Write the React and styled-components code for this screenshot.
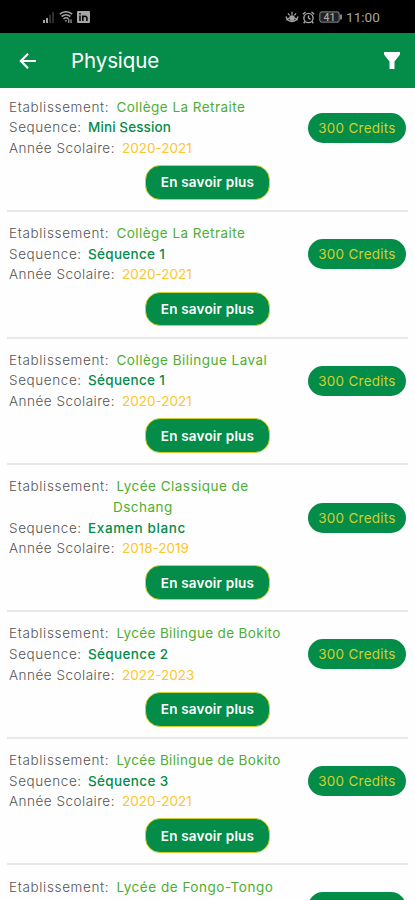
import React from 'react';
import styled, { createGlobalStyle, ThemeProvider } from 'styled-components';

const theme = {
  colors: {
    primary: '#048c49',
    institution: '#4fae32',
    sequence: '#048c49',
    year: '#fcc62c',
    accent: '#d3d02c',
    label: '#555',
    divider: '#e8e8e8',
  },
};

const GlobalStyle = createGlobalStyle`
  * {
    box-sizing: border-box;
  }
  body {
    margin: 0;
    background: #fefefe;
    font-family: Inter, "Noto Sans", sans-serif;
  }
`;

const Screen = styled.div`
  height: 900px;
  overflow: hidden;
`;

// Phone status bar
const StatusBar = styled.div`
  display: flex;
  justify-content: space-between;
  align-items: center;
  height: 33px;
  padding: 1px 34px 0 42px;
  background: #000;
  color: #a5a5a5;
`;

const StatusGroup = styled.div`
  display: flex;
  align-items: center;
  gap: ${({ $gap }) => $gap}px;

  svg {
    display: block;
  }
`;

const Clock = styled.span`
  width: 35px;
  font-family: Roboto, sans-serif;
  font-size: 13.6px;
  line-height: 16px;
  white-space: nowrap;
`;

// App bar with the back arrow and the filter
const AppBar = styled.header`
  display: flex;
  align-items: center;
  height: 55px;
  padding: 0 14px 0 16px;
  background: ${({ theme }) => theme.colors.primary};
  color: #fff;
`;

const IconButton = styled.button`
  display: flex;
  padding: 0;
  border: 0;
  background: none;
  color: inherit;
`;

const Title = styled.h1`
  flex: 1;
  margin: 0 0 0 31px;
  font-size: 20.5px;
  font-weight: 400;
  line-height: 28px;
  letter-spacing: -0.1px;
`;

const List = styled.main`
  padding: 0 7px;
`;

const Card = styled.article`
  display: flex;
  flex-direction: column;
  padding: 11.2px 2px 10.3px;
  border-bottom: 2px solid ${({ theme }) => theme.colors.divider};

  &:first-child {
    padding-top: 8.7px;
  }
`;

const CardBody = styled.div`
  display: flex;
  justify-content: space-between;
  align-items: center;
`;

const Field = styled.p`
  display: flex;
  margin: 0;
  font-size: 13.5px;
  line-height: 20.6px;
  white-space: nowrap;
`;

const Label = styled.span`
  width: ${({ $width }) => $width}px;
  font-weight: 300;
  color: ${({ theme }) => theme.colors.label};
  letter-spacing: ${({ $spacing }) => $spacing}px;
`;

const Value = styled.span`
  color: ${({ theme, $kind }) => theme.colors[$kind]};
  font-weight: ${({ $kind }) => ($kind === 'sequence' ? 500 : 400)};
  letter-spacing: ${({ $spacing = 0 }) => $spacing}px;
`;

// Second line of a long school name
const WrappedLine = styled.span`
  display: block;
  margin-left: -3.5px;
`;

const Credits = styled.span`
  flex: none;
  width: 98px;
  height: 30px;
  border-radius: 15px;
  background: ${({ theme }) => theme.colors.primary};
  color: ${({ theme }) => theme.colors.accent};
  font-size: 13.5px;
  line-height: 30px;
  letter-spacing: 0.25px;
  text-align: center;
  white-space: nowrap;
`;

const MoreButton = styled.button`
  align-self: center;
  width: 125px;
  height: 34.6px;
  margin-top: 6.7px;
  padding: 0;
  border: 1px solid ${({ theme }) => theme.colors.accent};
  border-radius: 15px;
  background: ${({ theme }) => theme.colors.primary};
  color: #fff;
  font: 600 13.5px/30px Inter, "Noto Sans", sans-serif;
  letter-spacing: 0.2px;
`;

const SignalIcon = () => (
  <svg width="13" height="12" viewBox="0 0 13 12" fill="currentColor">
    <path d="M1 9h2v3H1zM4 7h2v5H4z" />
    <path d="M7 4h2v8H7zM10 1h2v11h-2z" opacity=".28" />
  </svg>
);

const WifiIcon = () => (
  <svg width="14" height="13" viewBox="0 0 14 13" fill="none" stroke="currentColor" strokeWidth="1.6">
    <path d="M.8 3.2Q7-1.6 13.2 3.2M2.6 5.5Q7 2 11.4 5.5M4.5 7.8Q7 5.8 9.5 7.8" />
    <path d="M5.6 9.2h2.8L7 11z" fill="currentColor" stroke="none" />
    <path d="M9.8 8v4M12 8.5V12" strokeWidth="1.2" />
  </svg>
);

const LinkedinIcon = () => (
  <svg width="13" height="12" viewBox="0 0 13 12">
    <rect width="13" height="12" rx="1" fill="currentColor" />
    <path
      d="M3 4.6V10M3 2v1.4M5.8 10V4.6M5.8 7Q6 5.2 7.9 5.2T9.9 7.2V10"
      fill="none"
      stroke="#000"
      strokeWidth="1.5"
    />
  </svg>
);

// Eye-comfort mode: lashes above a lowered lid
const EyeIcon = () => (
  <svg width="14" height="12" viewBox="0 0 14 12" fill="none" stroke="currentColor" strokeWidth="1.3">
    <path d="M1 5.5Q2.5 10.5 7 10.5T13 5.5M1.2 9L4 7M12.8 9L10 7M7 .8v3M3 2.3l1.6 2M11 2.3l-1.6 2" />
    <circle cx="7" cy="7" r="2.2" fill="currentColor" />
  </svg>
);

const AlarmIcon = () => (
  <svg width="13" height="13" viewBox="0 0 13 13" fill="none" stroke="currentColor" strokeWidth="1.4">
    <circle cx="6.5" cy="7" r="4.6" />
    <path d="M.8 3.3L3.5 1M12.2 3.3L9.5 1M6.5 4.5V7l2 1.4M3 10.5l-1.3 1.7M10 10.5l1.3 1.7" />
  </svg>
);

const BatteryIcon = () => (
  <svg width="24" height="12" viewBox="0 0 24 12" fill="none" stroke="currentColor">
    <rect x=".8" y=".8" width="19.4" height="10.4" rx="2.5" fill="#222" stroke="#707070" strokeWidth="1.2" />
    <path d="M22 3.5v5" strokeWidth="1.6" />
    <text x="10.5" y="9.6" textAnchor="middle" fill="currentColor" stroke="none" fontFamily="Roboto" fontSize="10.5" fontWeight="500">
      41
    </text>
  </svg>
);

const BackIcon = () => (
  <svg width="24" height="24" viewBox="0 0 24 24" fill="none" stroke="currentColor" strokeWidth="2.2">
    <path d="M19.8 12H5.5M12 4.8L4.9 12L12 19.2" />
  </svg>
);

const FilterIcon = () => (
  <svg width="18" height="18" viewBox="0 0 18 18" fill="currentColor">
    <path d="M1 0h16v2.5L11.5 9.5V17h-5V9.5L1 2.5z" />
  </svg>
);

// tracking: letter spacing of the school name and of the sequence
const papers = [
  { school: ['Collège La Retraite'], sequence: 'Mini Session', year: '2020-2021', tracking: [0.45, 0.1] },
  { school: ['Collège La Retraite'], sequence: 'Séquence 1', year: '2020-2021', tracking: [0.45, 0.3] },
  { school: ['Collège Bilingue Laval'], sequence: 'Séquence 1', year: '2020-2021', tracking: [0.48, 0.3] },
  { school: ['Lycée Classique de', 'Dschang'], sequence: 'Examen blanc', year: '2018-2019', tracking: [0.48, 0.64] },
  { school: ['Lycée Bilingue de Bokito'], sequence: 'Séquence 2', year: '2022-2023', tracking: [0.35, 0.35] },
  { school: ['Lycée Bilingue de Bokito'], sequence: 'Séquence 3', year: '2020-2021', tracking: [0.35, 0.35] },
  { school: ['Lycée de Fongo-Tongo'], sequence: 'Séquence 1', year: '2020-2021', tracking: [0.52, 0.3] },
];

const PaperCard = ({ paper }) => (
  <Card>
    <CardBody>
      <div>
        <Field>
          <Label $width={107.5} $spacing={0.65}>Etablissement:</Label>
          <Value $kind="institution" $spacing={paper.tracking[0]}>
            {paper.school[0]}
            {paper.school[1] && <WrappedLine>{paper.school[1]}</WrappedLine>}
          </Value>
        </Field>
        <Field>
          <Label $width={79} $spacing={0.6}>Sequence:</Label>
          <Value $kind="sequence" $spacing={paper.tracking[1]}>{paper.sequence}</Value>
        </Field>
        <Field>
          <Label $width={113} $spacing={0.5}>Année Scolaire:</Label>
          <Value $kind="year">{paper.year}</Value>
        </Field>
      </div>
      <Credits>300 Credits</Credits>
    </CardBody>
    <MoreButton>En savoir plus</MoreButton>
  </Card>
);

const App = () => (
  <ThemeProvider theme={theme}>
    <GlobalStyle />
    <Screen>
      <StatusBar>
        <StatusGroup $gap={4}>
          <SignalIcon />
          <WifiIcon />
          <LinkedinIcon />
        </StatusGroup>
        <StatusGroup $gap={3.5}>
          <EyeIcon />
          <AlarmIcon />
          <BatteryIcon />
          <Clock>11:00</Clock>
        </StatusGroup>
      </StatusBar>
      <AppBar>
        <IconButton aria-label="Retour">
          <BackIcon />
        </IconButton>
        <Title>Physique</Title>
        <IconButton aria-label="Filtrer">
          <FilterIcon />
        </IconButton>
      </AppBar>
      <List>
        {papers.map((paper, i) => (
          <PaperCard key={i} paper={paper} />
        ))}
      </List>
    </Screen>
  </ThemeProvider>
);

export default App;
